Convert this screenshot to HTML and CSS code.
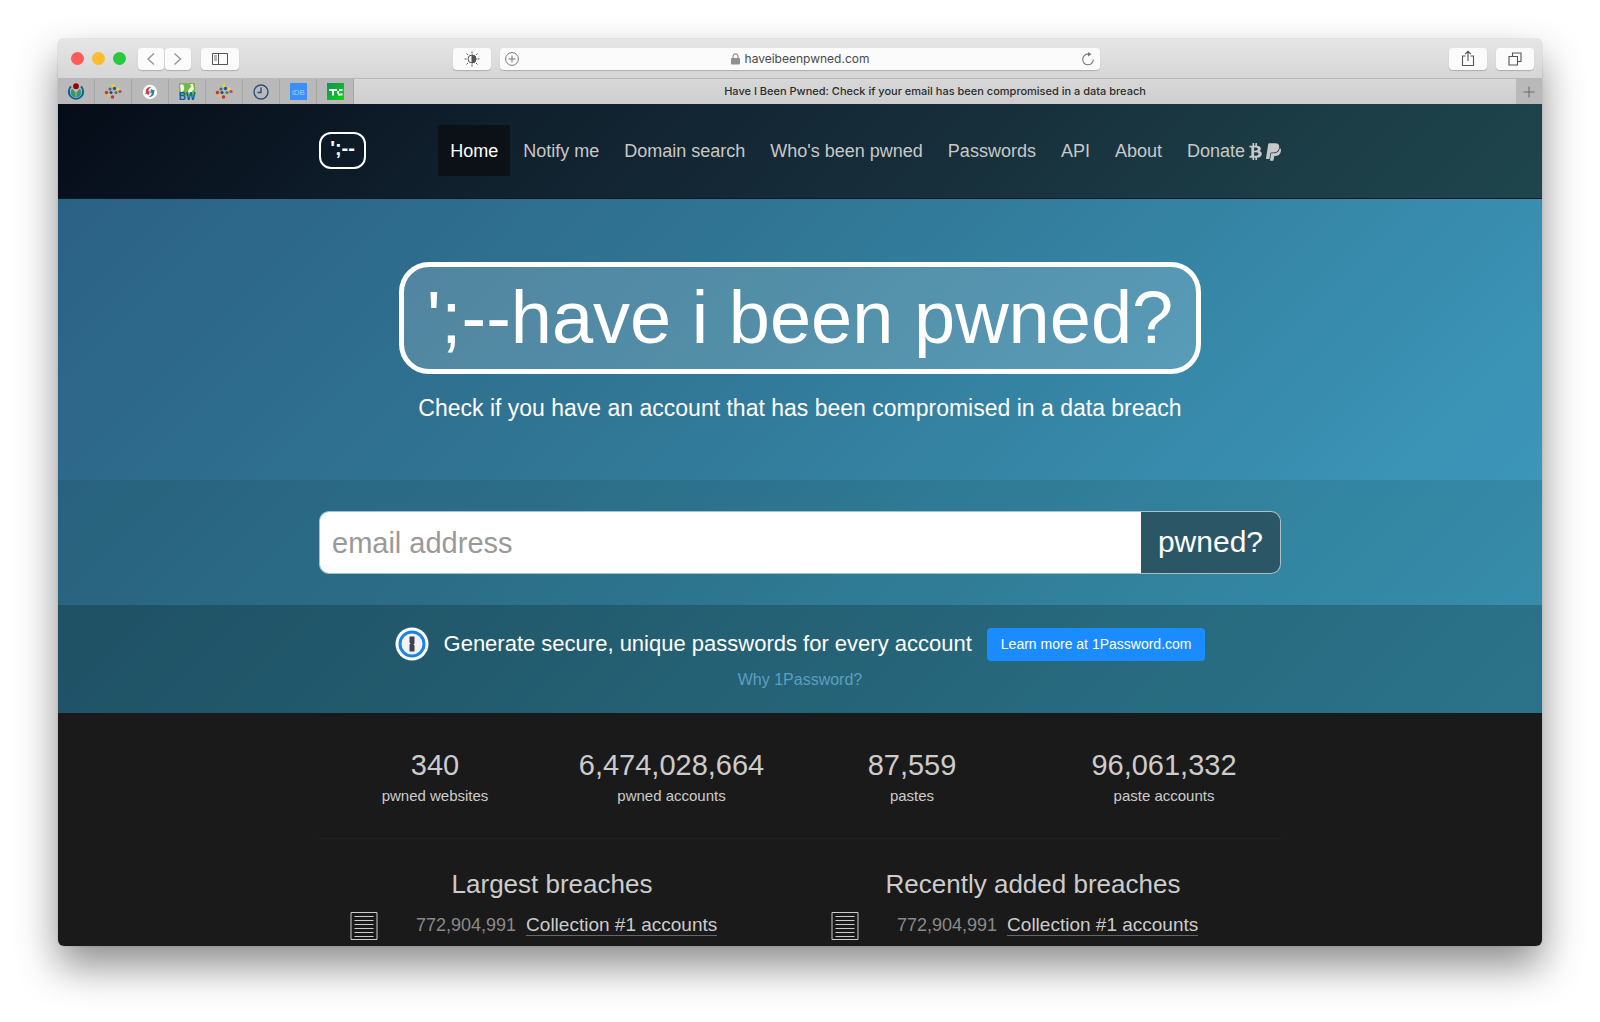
FILE: index.html
```html
<!DOCTYPE html>
<html lang="en">
<head>
  <meta charset="UTF-8" />
  <meta name="viewport" content="width=device-width, initial-scale=1.0"/>
  <title>Have I Been Pwned: Check if your email has been compromised in a data breach</title>
  <link rel="stylesheet" href="styles.css">
</head>
<body>
  <div class="window">
    <div class="toolbar">
      <div class="toolbar-left">
        <div class="lights">
          <button class="light red" aria-label="Close"></button>
          <button class="light yellow" aria-label="Minimize"></button>
          <button class="light green" aria-label="Zoom"></button>
        </div>
        <div class="history">
          <button class="tool small" aria-label="Back">
            <svg width="10" height="14" viewBox="0 0 10 14"><path d="M8 1.5 2 7 8 12.5" fill="none" stroke="#9a9a9a" stroke-width="1.5"/></svg>
          </button>
          <button class="tool small" aria-label="Forward">
            <svg width="10" height="14" viewBox="0 0 10 14"><path d="M1.500 1.5 7.5 7 1.500 12.5" fill="none" stroke="#9a9a9a" stroke-width="1.5"/></svg>
          </button>
        </div>
        <button class="tool" aria-label="Show sidebar">
          <svg width="16" height="12" viewBox="0 0 16 12" fill="none" stroke="#555"><path d="M.5.5h15v11H.5zM6.5.5v11"/><path d="M2 3h3M2 5h3M2 7h3" stroke-width=".8"/></svg>
        </button>
        <button class="tool reader" aria-label="Dark mode">
          <svg width="16" height="16" viewBox="0 0 16 16" fill="none" stroke="#555"><circle cx="8" cy="8" r="4"/><path d="M8 4a4 4 0 0 1 0 8z" fill="#555"/><path d="M8 .5v2M8 13.500v2M.5 8h2M13.500 8h2M2.500 2.500l1.500 1.500M12 12l1.500 1.500M2.500 13.500l1.500-1.500M12 4l1.500-1.500"/></svg>
        </button>
      </div>
      <div class="address">
        <button class="plain" aria-label="Add to reading list">
          <svg width="14" height="14" viewBox="0 0 14 14" fill="none" stroke="#777"><circle cx="7" cy="7" r="6.4"/><path d="M7 3.5v7M3.5 7h7"/></svg>
        </button>
        <span class="domain">
          <svg width="9" height="12" viewBox="0 0 9 12"><rect y="5" width="9" height="6.5" rx="1" fill="#8f8f8f"/><path d="M2 5.5V3.4a2.5 2.5 0 0 1 5 0v2.1" fill="none" stroke="#8f8f8f" stroke-width="1.2"/></svg>
          haveibeenpwned.com
        </span>
        <button class="plain" aria-label="Reload">
          <svg width="14" height="14" viewBox="0 0 14 14"><path d="M7.5 2.2A5.300 5.300 0 1 0 12.300 7.5" fill="none" stroke="#777" stroke-width="1.1"/><path d="M7 0 10.600 2.300 7 4.600z" fill="#777"/></svg>
        </button>
      </div>
      <div class="toolbar-right">
        <button class="tool" aria-label="Share">
          <svg width="14" height="17" viewBox="0 0 14 17" fill="none" stroke="#555" stroke-width="1.1"><path d="M4.5 6H1.5v9.5h11V6h-3M7 11V1.5M4.3 4 7 1.3 9.7 4"/></svg>
        </button>
        <button class="tool" aria-label="Show all tabs">
          <svg width="14" height="14" viewBox="0 0 14 14" fill="none" stroke="#555" stroke-width="1.1"><path d="M1 4.5h8.5V13H1zM4.5 4.500V1H13v8.500H9.500"/></svg>
        </button>
      </div>
    </div>

    <div class="tabs">
      <button class="pin" aria-label="Wikimedia">
        <svg width="18" height="18" viewBox="0 0 18 18" fill="none"><circle cx="9" cy="3.2" r="2.9" fill="#900"/><path d="M4 3.400a7.200 7.200 0 1 0 10 0" stroke="#0a6398" stroke-width="2"/><path d="M5.200 5.800a4.900 4.900 0 0 0 3.400 8.400V9.500zM12.800 5.800a4.900 4.900 0 0 1-3.400 8.400V9.500z" fill="#396"/></svg>
      </button>
      <button class="pin" aria-label="Wikidata">
        <svg width="18" height="18" viewBox="0 0 18 18"><g id="dots"><circle cx="9" cy="2.500" r="1.700" fill="#e8d21d"/><circle cx="6" cy="6" r="1.500" fill="#347a3c"/><circle cx="10.500" cy="5.500" r="1.700" fill="#2b4fa3"/><circle cx="14" cy="6" r="1.500" fill="#eadb3a"/><circle cx="2.500" cy="9.500" r="1.700" fill="#d22b2b"/><circle cx="7" cy="9.500" r="1.600" fill="#333f9f"/><circle cx="12" cy="9.500" r="1.500" fill="#3c8a45"/><circle cx="16" cy="8.500" r="1.600" fill="#d1346b"/><circle cx="4.500" cy="12.500" r="1.400" fill="#e3ce26"/><circle cx="8.500" cy="14" r="1.700" fill="#c53131"/></g></svg>
      </button>
      <button class="pin" aria-label="Sync">
        <svg width="16" height="16" viewBox="0 0 16 16"><circle cx="8" cy="8" r="7.200" fill="#fff"/><path d="M9.500 3C5.500 2.500 3.200 5.500 4 8.500L2.800 9.300l4.200 1.700.8-4.200-1.500.7C6.300 5.500 7.500 4 9.500 3z" fill="#d8383c"/><path d="M6.500 13c4 .5 6.300-2.500 5.500-5.500l1.200-.8L9 5l-.8 4.200 1.500-.7c0 2-1.200 3.500-3.200 4.500z" fill="#2d7fae"/></svg>
      </button>
      <button class="pin" aria-label="BW">
        <svg width="18" height="18" viewBox="0 0 18 18"><rect x="1" width="16" height="13" fill="#76b54a"/><path d="M2 2c3-2 5 1 4 5l-3 3zM10 1c3 0 4 2 2 4s-3 4 0 6l4-5-1-5z" fill="#eef6e2"/><text x="9" y="17" text-anchor="middle" class="bw">BW</text></svg>
      </button>
      <button class="pin" aria-label="Wikidata query">
        <svg width="18" height="18" viewBox="0 0 18 18"><use href="#dots"/></svg>
      </button>
      <button class="pin" aria-label="Clock">
        <svg width="16" height="16" viewBox="0 0 16 16" fill="none" stroke="#2f4d80" stroke-width="1.400"><circle cx="8" cy="8" r="7"/><path d="M8 3.500V8.500H4.500"/></svg>
      </button>
      <button class="pin" aria-label="iDB">
        <svg width="17" height="17" viewBox="0 0 17 17"><rect width="17" height="17" fill="#3b8ff5"/><text x="8.500" y="11.500" text-anchor="middle" class="idb">iDB</text></svg>
      </button>
      <button class="pin" aria-label="TechCrunch">
        <svg width="17" height="17" viewBox="0 0 17 17"><defs><linearGradient id="tc" x1="0" y1="0" x2="1" y2="1"><stop offset="0" stop-color="#0a9454"/><stop offset="1" stop-color="#12d312"/></linearGradient></defs><rect width="17" height="17" fill="url(#tc)"/><path d="M2 6h8v2H7v4.500H5V8H2zM15.500 6h-3.500v2h3.500zM10 8h2v2.500h-2zM11 10.500h4.500v2H11z" fill="#fff"/></svg>
      </button>
      <button class="tab">Have I Been Pwned: Check if your email has been compromised in a data breach</button>
      <button class="new-tab" aria-label="New tab">
        <svg width="12" height="12" viewBox="0 0 12 12"><path d="M6 .5v11M.5 6h11" stroke="#6a6a6a" fill="none"/></svg>
      </button>
    </div>

    <header class="site-header">
      <div class="container header-row">
        <a href="#" class="brand" aria-label="Have I Been Pwned">';--</a>
        <nav class="menu">
          <a href="#" class="active">Home</a>
          <a href="#">Notify me</a>
          <a href="#">Domain search</a>
          <a href="#">Who's been pwned</a>
          <a href="#">Passwords</a>
          <a href="#">API</a>
          <a href="#">About</a>
          <a href="#" class="donate">Donate
            <svg width="13" height="17" viewBox="0 0 384 512"><path fill="currentColor" d="M310.204 242.638c27.730-14.180 45.377-39.390 41.280-81.300-5.358-57.351-52.458-76.573-114.850-81.929V0h-48.528v77.203c-12.605 0-25.525.315-38.444.630V0h-48.528v79.409c-17.842.539-38.622.276-97.370 0v51.678c38.314-.678 58.417-3.140 63.023 21.427v217.429c-2.925 19.492-18.524 16.685-53.255 16.071L3.765 443.680c88.481 0 97.370.315 97.370.315V512h48.528v-67.060c13.234.315 26.154.315 38.444.315V512h48.528v-68.005c81.299-4.412 135.647-24.894 142.895-101.467 5.671-61.446-23.314-88.862-69.326-99.890zM150.608 134.553c27.415 0 113.126-8.507 113.126 48.528 0 54.515-85.710 48.212-113.126 48.212v-96.740zm0 251.776V279.821c32.772 0 133.127-9.138 133.127 53.255-.001 60.186-100.355 53.253-133.127 53.253z"/></svg>
            <svg width="15" height="20" viewBox="0 0 384 512"><path fill="currentColor" d="M111.400 295.900c-3.500 19.200-17.400 108.700-21.500 134-.3 1.800-1 2.500-3 2.500H12.300c-7.600 0-13.100-6.600-12.100-13.900L58.800 46.600c1.500-9.600 10.100-16.900 20-16.900 152.300 0 165.100-3.700 204 11.400 60.100 23.300 65.600 79.500 44 140.300-21.500 62.600-72.500 89.500-140.100 90.300-43.400.7-69.500-7-75.300 24.200zM357.100 152c-1.800-1.300-2.500-1.800-3 1.300-2 11.400-5.100 22.500-8.800 33.600-39.900 113.800-150.500 103.900-204.500 103.900-6.100 0-10.100 3.300-10.900 9.400-22.600 140.400-27.100 169.700-27.100 169.700-1 7.100 3.500 12.900 10.600 12.900h63.500c8.600 0 15.700-6.300 17.400-14.900.7-5.400-1.100 6.100 14.400-91.300 4.600-22 14.300-19.700 29.300-19.700 71 0 126.400-28.800 142.900-112.300 6.500-34.800 4.600-71.400-23.800-92.600z"/></svg>
          </a>
        </nav>
      </div>
    </header>

    <main>
      <div class="banner">
        <section class="hero">
          <h1>';--have i been pwned?</h1>
          <p>Check if you have an account that has been compromised in a data breach</p>
        </section>
        <section class="search">
          <form class="container search-form">
            <input type="email" class="email" placeholder="email address" aria-label="email address" />
            <button type="submit" class="submit">pwned?</button>
          </form>
        </section>
        <section class="promo">
          <div class="promo-row">
            <svg width="34" height="34" viewBox="0 0 34 34"><circle cx="17" cy="17" r="16.500" fill="#fff"/><circle cx="17" cy="17" r="12" fill="#f3f3f5" stroke="#1a83ea" stroke-width="3"/><path d="M14.500 9.500h5v7l-1 1 1 1v6h-5v-7l1-1-1-1z" fill="#3d4350"/></svg>
            <span>Generate secure, unique passwords for every account</span>
            <a href="#" class="learn">Learn more at 1Password.com</a>
          </div>
          <a href="#" class="why">Why 1Password?</a>
        </section>
      </div>

      <section class="details">
        <div class="container">
          <div class="stats">
            <div><strong>340</strong><span>pwned websites</span></div>
            <div><strong>6,474,028,664</strong><span>pwned accounts</span></div>
            <div><strong>87,559</strong><span>pastes</span></div>
            <div><strong>96,061,332</strong><span>paste accounts</span></div>
          </div>
          <hr>
          <div class="breaches">
            <div class="breach-list">
              <h2>Largest breaches</h2>
              <div class="breach">
                <svg width="28" height="28" viewBox="0 0 28 28" fill="none" stroke="#ccc"><path d="M1 .5h26v27H1z" id="sheet"/><path id="lines" d="M4.500 4.500h19M4.500 8.500h19M4.500 12.500h19M4.500 16.500h19M4.500 20.500h19M4.500 24.500h19"/></svg>
                <span class="count">772,904,991</span>
                <a href="#">Collection #1 accounts</a>
              </div>
            </div>
            <div class="breach-list">
              <h2>Recently added breaches</h2>
              <div class="breach">
                <svg width="28" height="28" viewBox="0 0 28 28" fill="none" stroke="#ccc"><use href="#sheet"/><use href="#lines"/></svg>
                <span class="count">772,904,991</span>
                <a href="#">Collection #1 accounts</a>
              </div>
            </div>
          </div>
        </div>
      </section>
    </main>
  </div>
</body>
</html>
```
FILE: styles.css
```css
* { box-sizing: border-box; }
body {
  font-family: "Liberation Sans", Arial, sans-serif;
  margin: 0;
  padding: 39px 58px 76px;
  background: white;
}
button {
  border: none;
  padding: 0;
  font-family: inherit;
  cursor: pointer;
}
svg { display: block; flex: none; }
a { text-decoration: none; }

.window {
  border-radius: 6px;
  overflow: hidden;
  box-shadow: 0 0 1px rgba(0,0,0,0.5), 0 20px 40px rgba(0,0,0,0.45);
}

/* browser toolbar */
.toolbar {
  display: grid;
  grid-template-columns: 1fr minmax(0, 600px) 1fr;
  align-items: center;
  height: 39px;
  background: linear-gradient(#e6e6e6, #d6d6d6);
}
.toolbar-left, .toolbar-right { display: flex; align-items: center; }
.toolbar-left { padding: 0 9px 0 13px; }
.toolbar-right { justify-content: flex-end; gap: 9px; padding-right: 8px; }
.lights { display: flex; gap: 8px; margin-right: 12px; }
.light { width: 13px; height: 13px; border-radius: 50%; }
.red { background: #fc5b57; }
.yellow { background: #fdbc2e; }
.green { background: #28c93f; }
.history { display: flex; gap: 1px; margin-right: 10px; }
.tool {
  display: flex;
  align-items: center;
  justify-content: center;
  width: 38px;
  height: 22px;
  border-radius: 4px;
  background: #fbfbfb;
  box-shadow: 0 1px 1px rgba(0,0,0,0.2);
}
.small { width: 26px; }
.reader { margin-left: auto; }
.address {
  display: flex;
  align-items: center;
  justify-content: space-between;
  height: 22px;
  padding: 0 5px;
  border-radius: 4px;
  background: #fbfbfb;
  box-shadow: 0 1px 1px rgba(0,0,0,0.2);
}
.plain { background: none; }
.domain {
  display: flex;
  align-items: center;
  gap: 5px;
  font: 12px Inter, sans-serif;
  color: #4a4a4a;
}

/* tab strip */
.tabs {
  display: flex;
  height: 26px;
  border-top: 1px solid #b9b9b9;
  background: #b9b9b9;
}
.pin, .new-tab { display: flex; flex: none; align-items: center; justify-content: center; background: none; }
.pin { width: 37px; border-right: 1px solid #a6a6a6; }
.new-tab { width: 26px; }
.tab {
  flex: 1;
  padding-bottom: 2px;
  background: linear-gradient(#d8d8d8, #cecece);
  font: 500 11px Inter, sans-serif;
  color: #2c2c2c;
}
.bw { font: bold 10px "Liberation Sans", sans-serif; fill: #0b5fa5; }
.idb { font: 8px "Liberation Sans", sans-serif; fill: #a5cdfb; }

/* site header */
.container { max-width: 962px; margin: 0 auto; }
.site-header {
  padding: 21px 0 22px;
  background: linear-gradient(135deg, #050c18, #10202d 30%, #172f3b 60%, #1b3c45 80%, #1f464c);
  border-bottom: 1px solid #0c1a22;
}
.header-row { display: flex; align-items: center; justify-content: space-between; }
.brand {
  width: 47px;
  height: 37px;
  border: 2px solid white;
  border-radius: 12px;
  color: white;
  font-size: 20px;
  font-weight: bold;
  line-height: 28px;
  text-align: center;
}
.menu { display: flex; gap: 1px; }
.menu a {
  padding: 2px 12px 0;
  border-radius: 2px;
  color: #c8c8c8;
  font-size: 18px;
  line-height: 49px;
}
.menu .active { background: #0b1117; color: white; }
.menu .donate { display: flex; align-items: center; gap: 4px; padding-right: 0; }

/* blue area */
.banner {
  background: linear-gradient(135deg, #2b6185, #317796 40%, #3a92b4 80%, #3f9cc2);
  color: white;
  text-align: center;
}
.hero { padding: 63px 0 58px; }
.hero h1 {
  display: inline-block;
  margin: 0;
  padding: 9px 23px;
  border: 5px solid white;
  border-radius: 30px;
  background: rgba(255,255,255,0.17);
  font-size: 74px;
  font-weight: normal;
  line-height: 84px;
  vertical-align: top;
}
.hero p { margin: 20px 0 0; font-size: 23px; line-height: 28px; }
.search { padding: 31px 0; background: rgba(10,50,30,0.12); }
.search-form { display: flex; height: 63px; }
.email {
  flex: 1;
  min-width: 0;
  padding: 1px 12px 0;
  border: 1px solid #9bc4d6;
  border-right: none;
  border-radius: 10px 0 0 10px;
  font: 29px "Liberation Sans", Arial, sans-serif;
}
.email::placeholder { color: #999; }
.submit {
  padding: 0 17px 2px;
  border: 1px solid #a9c1c9;
  border-left: none;
  border-radius: 0 10px 10px 0;
  background: #2b5666;
  color: white;
  font-size: 30px;
}
.promo { padding: 22px 0 23px; background: rgba(0,20,10,0.3); }
.promo-row {
  display: flex;
  align-items: center;
  justify-content: center;
  gap: 15px;
  margin-bottom: 9px;
  font-size: 22px;
}
.learn {
  padding: 0 14px;
  border-radius: 4px;
  background: #1a8cff;
  color: white;
  font-size: 14px;
  line-height: 33px;
}
.why { display: block; color: #5c9fc0; font-size: 16px; line-height: 20px; }

/* dark area */
.details { padding: 36px 0 6px; background: #1a1a1a; color: #ccc; }
.stats {
  display: grid;
  grid-template-columns: 232fr 241fr 240fr 264fr;
  margin-right: -15px;
  text-align: center;
}
.stats strong { display: block; margin-bottom: 5px; font-size: 29px; font-weight: normal; line-height: 32px; }
.stats span { display: block; font-size: 15px; line-height: 20px; }
hr { height: 1px; margin: 32px 0 30px; border: none; background: #222; }
.breaches { display: grid; grid-template-columns: 1fr 1fr; }
.breach-list { padding-right: 15px; }
.breach-list h2 {
  margin: 0 0 13px;
  font-size: 26px;
  font-weight: normal;
  line-height: 30px;
  text-align: center;
}
.breach { display: flex; padding-left: 31px; font-size: 18px; line-height: 23px; }
.breach .count { margin: 2px 10px 0 38px; color: #8a8a8a; }
.breach a { height: 23px; margin-top: 1px; border-bottom: 1px solid #666; color: #ccc; font-size: 19px; }
```
